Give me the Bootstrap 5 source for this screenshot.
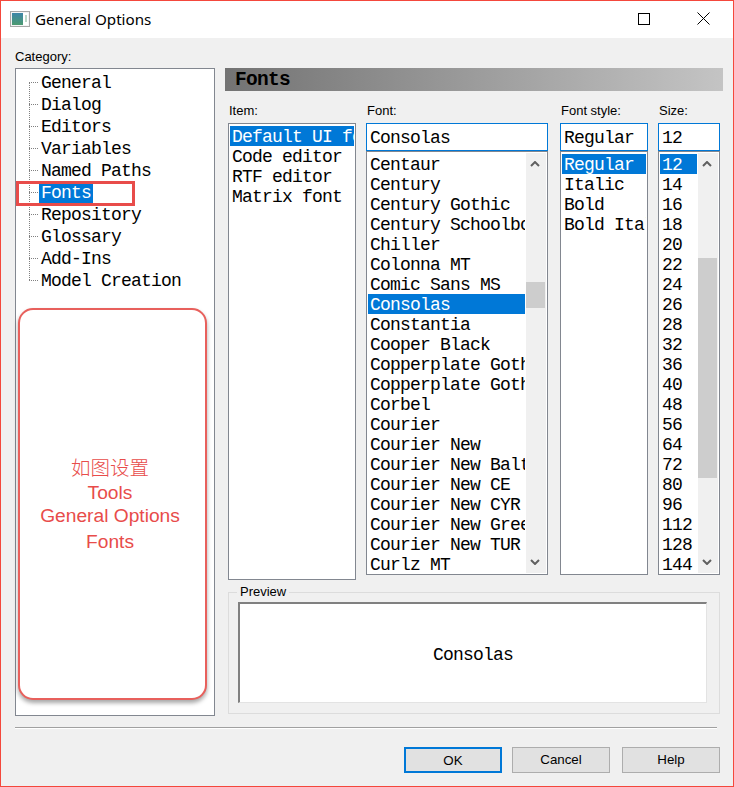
<!DOCTYPE html>
<html lang="en">
<head>
  <meta charset="UTF-8" />
  <meta name="viewport" content="width=device-width, initial-scale=1.0" />
  <title>General Options</title>
  <link href="https://cdn.jsdelivr.net/npm/bootstrap@5.3.3/dist/css/bootstrap.min.css" rel="stylesheet">
  <style>
    html, body { height: 100%; }
    body { background: #f0f0f0; color: #000; font-family: "Liberation Sans", Arial, sans-serif; font-size: 13px; line-height: 14px; }
    .dlg-window { width: 734px; height: 787px; border: 1px solid #f4483c; overflow: hidden; position: relative; }
    .dlg-title { height: 37px; background: #fff; padding: 0 3px 2px 9px; gap: 5px; }
    .dlg-title-text { font-family: "Noto Sans", sans-serif; font-size: 15.2px; }
    .dlg-ctl { width: 54px; height: 35px; }
    .dlg-body { padding: 12px 0 0 14px; }
    .dlg-left { width: 200px; }
    .dlg-label { height: 18px; }
    .mono-text { font-family: "Liberation Mono", monospace; font-size: 18px; letter-spacing: -.8px; }
    .tree-box { width: 200px; height: 648px; background: #fff; border: 1px solid #828790; position: relative; padding-top: 2px; }
    .tree-row { height: 22px; line-height: 22px; display: flex; align-items: center; padding-left: 13px; position: relative; }
    .tree-row::before { content: ""; width: 9px; border-top: 1px dotted #808080; margin-right: 1px; }
    .tree-rows { position: relative; }
    .tree-rows::before { content: ""; position: absolute; left: 13px; top: 11px; bottom: 11px; border-left: 1px dotted #808080; }
    .tree-text { padding: 0 2px; height: 22px; line-height: 24px; }
    .tree-sel { background: #0078d7; color: #fff; }
    .mark-rect { position: absolute; left: 0; top: 112px; width: 119px; height: 25px; border: 3px solid #e84c4a; }
    .mark-round { position: absolute; left: 2px; top: 239px; width: 189px; height: 392px; padding: 4px 5px 0 0; border: 2px solid #e8605c; border-radius: 15px; box-shadow: 0 3px 4px rgba(0,0,0,.35); background: #fff; color: #e84c4a; font-size: 19.2px; line-height: 24px; text-align: center; }
    .mark-cjk { font-family: "Noto Sans CJK SC", sans-serif; font-size: 19.5px; font-weight: 300; margin-bottom: 2px; margin-top: -4px; }
    .mark-tight { margin-top: -1px; }
    .mark-loose { margin-top: 2px; }
    .dlg-right { width: 498px; margin-left: 10px; margin-top: 18px; }
    .pane-head { height: 23px; background: linear-gradient(to right, #737373, #c4c4c4); font-family: "Liberation Mono", monospace; font-weight: 700; font-size: 19.5px; letter-spacing: -.7px; line-height: 25px; padding-left: 10px; }
    .cols { padding-left: 3px; gap: 0; }
    .col-item { width: 128px; margin-right: 10px; }
    .col-font { width: 182px; margin-right: 12px; }
    .col-style { width: 88px; margin-right: 10px; }
    .col-size { width: 62px; }
    .col-cap { height: 32px; display: flex; align-items: flex-end; padding: 0 0 5px 1px; }
    .combo-in { height: 28px; border: 1px solid #0078d7; background: #fff; line-height: 29px; padding: 0 0 0 3px; }
    .font-list { background: #fff; border: 1px solid #828790; padding: 2px 1px; position: relative; overflow: hidden; }
    .list-tall { height: 457px; }
    .list-short { height: 424px; }
    .font-row { height: 20px; line-height: 22px; padding-left: 2px; white-space: nowrap; overflow: hidden; }
    .font-row.picked { background: #0078d7; color: #fff; }
    .rows-clip { overflow: hidden; height: 100%; }
    .scroll-bar { width: 20px; margin: -1px 0 -1px 1px; background: #f0f0f0; position: relative; }
    .scroll-thumb { position: absolute; left: 0; width: 19px; background: #cdcdcd; }
    .thumb-font { top: 129px; height: 26px; }
    .thumb-size { top: 105px; height: 220px; }
    .scroll-arrow { position: absolute; left: 4px; width: 10px; height: 6px; }
    .arrow-up { top: 8px; }
    .arrow-down { bottom: 8px; }
    .prev-group { width: 492px; margin: 5px 0 0 3px; padding: 0 12px 10px 9px; border: 1px solid #dcdcdc; height: 129px; min-width: 0; }
    .prev-group legend { float: none; width: auto; font-size: 13px; line-height: 14px; margin: 0 0 3px -1px; padding: 0 3px; }
    .prev-box { height: 101px; padding-top: 3px; background: #fff; border-style: solid; border-width: 2px 1px 1px 2px; border-color: #808080 #e3e3e3 #e3e3e3 #808080; }
    .dlg-rule { width: 702px; height: 2px; margin: 11px 0 0 14px; border-top: 1px solid #a0a0a0; background: #fff; }
    .dlg-foot { padding: 18px 13px 0 0; }
    .dlg-btn { width: 98px; height: 26px; padding: 0; background: #e1e1e1; border: 1px solid #adadad; border-radius: 0; font-size: 13.33px; line-height: 24px; color: #000; margin-left: 10px; }
    .dlg-btn-main { border: 2px solid #0078d7; }
    .dlg-btn-gap { margin-left: 12px; }
  </style>
</head>
<body>
  <div class="dlg-window">
    <div class="dlg-title d-flex align-items-center">
      <svg width="20" height="16" viewBox="0 0 20 16">
        <defs><linearGradient id="iconFill" x1="0" y1="0" x2="0" y2="1"><stop offset="0" stop-color="#3d86a8"/><stop offset="1" stop-color="#4c9a70"/></linearGradient></defs>
        <rect x="0.5" y="0.5" width="19" height="15" fill="#f4f4f4" stroke="#a8a8a8"/>
        <rect x="2" y="2" width="11" height="12" fill="url(#iconFill)"/>
        <rect x="13" y="2" width="5" height="12" fill="#fff"/>
        <rect x="15" y="4" width="2" height="7" fill="#bcd8c8"/>
      </svg>
      <span class="dlg-title-text flex-grow-1">General Options</span>
      <div class="dlg-ctl d-flex align-items-center justify-content-center">
        <svg width="12" height="12" viewBox="0 0 12 12"><rect x="0.5" y="0.5" width="11" height="11" fill="none" stroke="#000"/></svg>
      </div>
      <div class="dlg-ctl d-flex align-items-center justify-content-center">
        <svg width="13" height="13" viewBox="0 0 13 13"><path d="M0.5 0.5L12.5 12.5M12.5 0.5L0.5 12.5" stroke="#000" fill="none"/></svg>
      </div>
    </div>

    <div class="dlg-body d-flex">
      <div class="dlg-left">
        <div class="dlg-label">Category:</div>
        <div class="tree-box">
          <div class="tree-rows mono-text">
            <div class="tree-row"><span class="tree-text">General</span></div>
            <div class="tree-row"><span class="tree-text">Dialog</span></div>
            <div class="tree-row"><span class="tree-text">Editors</span></div>
            <div class="tree-row"><span class="tree-text">Variables</span></div>
            <div class="tree-row"><span class="tree-text">Named Paths</span></div>
            <div class="tree-row"><span class="tree-text tree-sel">Fonts</span></div>
            <div class="tree-row"><span class="tree-text">Repository</span></div>
            <div class="tree-row"><span class="tree-text">Glossary</span></div>
            <div class="tree-row"><span class="tree-text">Add-Ins</span></div>
            <div class="tree-row"><span class="tree-text">Model Creation</span></div>
          </div>
          <div class="mark-rect"></div>
          <div class="mark-round d-flex flex-column justify-content-center">
            <div class="mark-cjk">如图设置</div>
            <div>Tools</div>
            <div class="mark-tight">General Options</div>
            <div class="mark-loose">Fonts</div>
          </div>
        </div>
      </div>

      <div class="dlg-right">
        <div class="pane-head">Fonts</div>
        <div class="cols d-flex align-items-start">
          <div class="col-item">
            <div class="col-cap">Item:</div>
            <div class="font-list list-tall mono-text">
              <div class="font-row picked">Default UI font</div>
              <div class="font-row">Code editor</div>
              <div class="font-row">RTF editor</div>
              <div class="font-row">Matrix font</div>
            </div>
          </div>
          <div class="col-font">
            <div class="col-cap">Font:</div>
            <div class="combo-in mono-text">Consolas</div>
            <div class="font-list list-short d-flex mono-text">
              <div class="rows-clip flex-grow-1">
                <div class="font-row">Centaur</div>
                <div class="font-row">Century</div>
                <div class="font-row">Century Gothic</div>
                <div class="font-row">Century Schoolbook</div>
                <div class="font-row">Chiller</div>
                <div class="font-row">Colonna MT</div>
                <div class="font-row">Comic Sans MS</div>
                <div class="font-row picked">Consolas</div>
                <div class="font-row">Constantia</div>
                <div class="font-row">Cooper Black</div>
                <div class="font-row">Copperplate Gothic</div>
                <div class="font-row">Copperplate Gothic</div>
                <div class="font-row">Corbel</div>
                <div class="font-row">Courier</div>
                <div class="font-row">Courier New</div>
                <div class="font-row">Courier New Baltic</div>
                <div class="font-row">Courier New CE</div>
                <div class="font-row">Courier New CYR</div>
                <div class="font-row">Courier New Greek</div>
                <div class="font-row">Courier New TUR</div>
                <div class="font-row">Curlz MT</div>
              </div>
              <div class="scroll-bar flex-shrink-0">
                <svg class="scroll-arrow arrow-up" viewBox="0 0 10 6"><path d="M1 5L5 1L9 5" fill="none" stroke="#606060" stroke-width="2"/></svg>
                <div class="scroll-thumb thumb-font"></div>
                <svg class="scroll-arrow arrow-down" viewBox="0 0 10 6"><path d="M1 1L5 5L9 1" fill="none" stroke="#606060" stroke-width="2"/></svg>
              </div>
            </div>
          </div>
          <div class="col-style">
            <div class="col-cap">Font style:</div>
            <div class="combo-in mono-text">Regular</div>
            <div class="font-list list-short mono-text">
              <div class="font-row picked">Regular</div>
              <div class="font-row">Italic</div>
              <div class="font-row">Bold</div>
              <div class="font-row">Bold Italic</div>
            </div>
          </div>
          <div class="col-size">
            <div class="col-cap">Size:</div>
            <div class="combo-in mono-text">12</div>
            <div class="font-list list-short d-flex mono-text">
              <div class="rows-clip flex-grow-1">
                <div class="font-row picked">12</div>
                <div class="font-row">14</div>
                <div class="font-row">16</div>
                <div class="font-row">18</div>
                <div class="font-row">20</div>
                <div class="font-row">22</div>
                <div class="font-row">24</div>
                <div class="font-row">26</div>
                <div class="font-row">28</div>
                <div class="font-row">32</div>
                <div class="font-row">36</div>
                <div class="font-row">40</div>
                <div class="font-row">48</div>
                <div class="font-row">56</div>
                <div class="font-row">64</div>
                <div class="font-row">72</div>
                <div class="font-row">80</div>
                <div class="font-row">96</div>
                <div class="font-row">112</div>
                <div class="font-row">128</div>
                <div class="font-row">144</div>
              </div>
              <div class="scroll-bar flex-shrink-0">
                <svg class="scroll-arrow arrow-up" viewBox="0 0 10 6"><path d="M1 5L5 1L9 5" fill="none" stroke="#606060" stroke-width="2"/></svg>
                <div class="scroll-thumb thumb-size"></div>
                <svg class="scroll-arrow arrow-down" viewBox="0 0 10 6"><path d="M1 1L5 5L9 1" fill="none" stroke="#606060" stroke-width="2"/></svg>
              </div>
            </div>
          </div>
        </div>
        <fieldset class="prev-group">
          <legend>Preview</legend>
          <div class="prev-box d-flex align-items-center justify-content-center mono-text">Consolas</div>
        </fieldset>
      </div>
    </div>

    <div class="dlg-rule"></div>
    <div class="dlg-foot d-flex justify-content-end">
      <button type="button" class="btn dlg-btn dlg-btn-main">OK</button>
      <button type="button" class="btn dlg-btn">Cancel</button>
      <button type="button" class="btn dlg-btn dlg-btn-gap">Help</button>
    </div>
  </div>
  <script src="https://cdn.jsdelivr.net/npm/bootstrap@5.3.3/dist/js/bootstrap.bundle.min.js"></script>
</body>
</html>
